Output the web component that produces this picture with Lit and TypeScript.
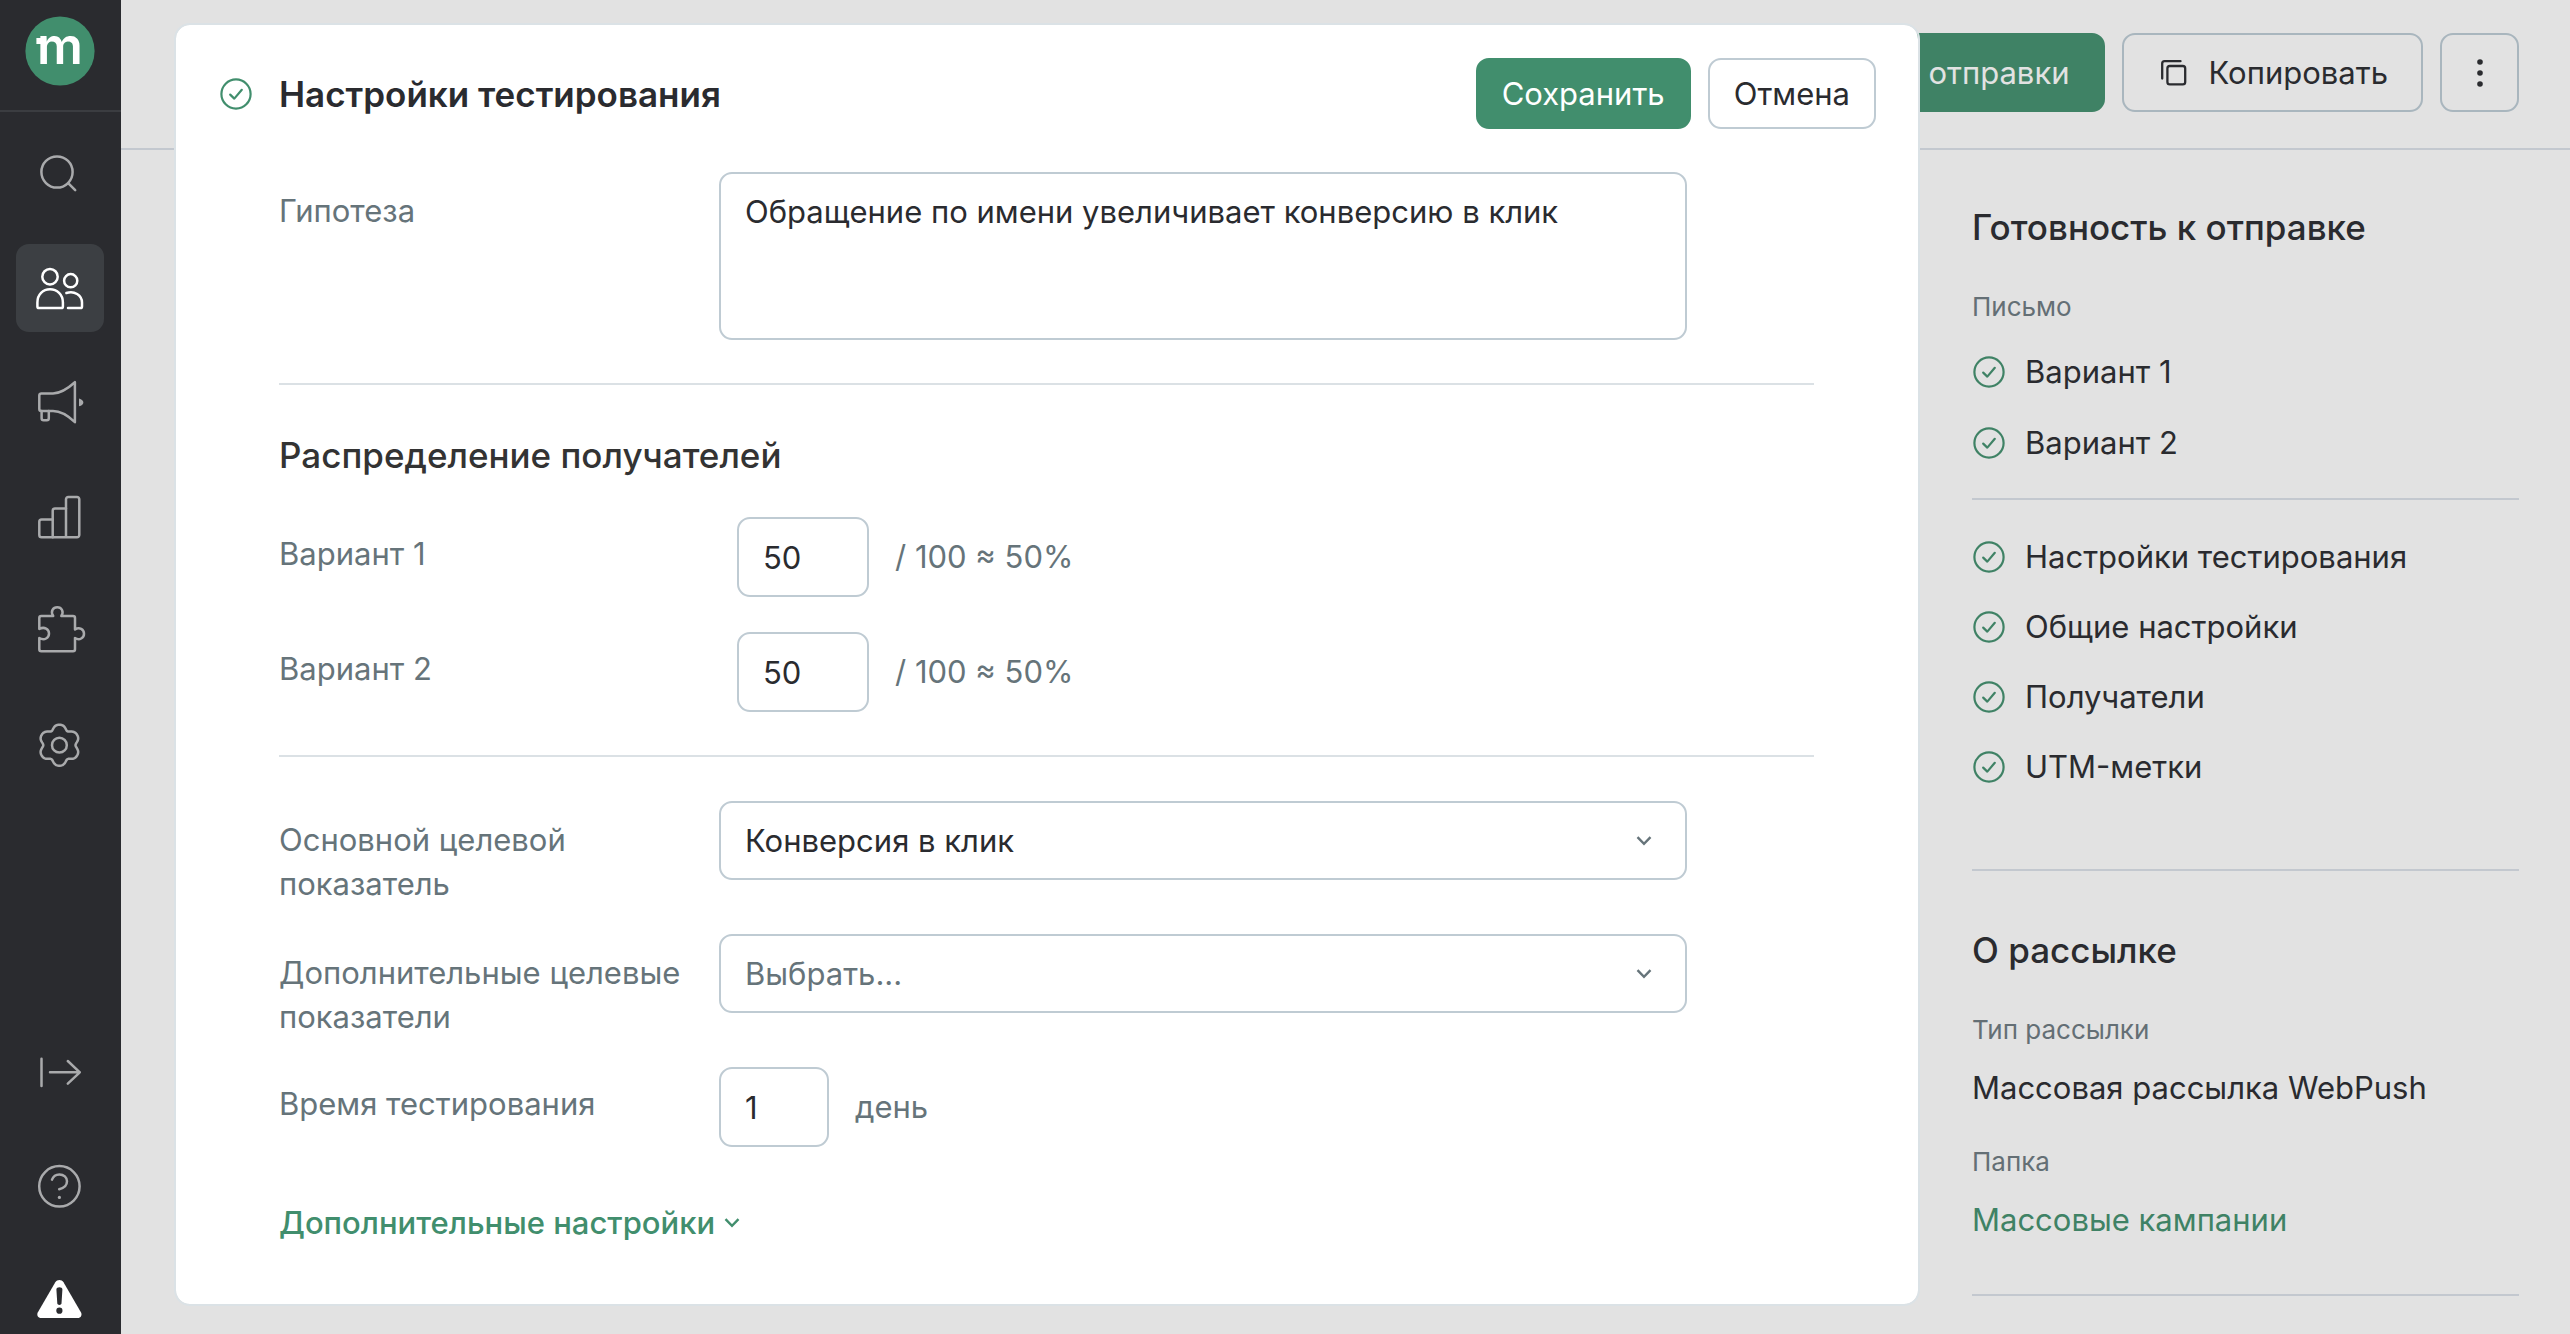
import { LitElement, html, svg, css, type SVGTemplateResult } from "lit";
import { customElement, property, state } from "lit/decorators.js";
import { classMap } from "lit/directives/class-map.js";

/* Closed wavy outline of the settings gear: six soft lobes round a centre. */
function gearOutline(cx: number, cy: number): string {
  const points: string[] = [];
  for (let i = 0; i < 120; i++) {
    const a = (i / 120) * Math.PI * 2;
    const r = 18.7 + 2.2 * Math.cos(6 * a) - 0.4 * Math.cos(12 * a);
    points.push(`${(cx + r * Math.sin(a)).toFixed(2)} ${(cy - r * Math.cos(a)).toFixed(2)}`);
  }
  return `M${points.join("L")}Z`;
}

const glyphs: Record<string, SVGTemplateResult> = {
  search: svg`<circle cx="21" cy="22" r="15.6"/><path d="M32.2 33.2L39.2 40.2"/>`,
  people: svg`
    <circle cx="14" cy="12.7" r="7.7"/>
    <circle cx="34.7" cy="16.7" r="6.6"/>
    <path d="M1.4 38.5C1.4 30.5 7 25.3 14 25.3S26.9 30.5 26.9 38.5V42.4a1.6 1.6 0 0 1-1.6 1.6H3a1.6 1.6 0 0 1-1.6-1.6Z"/>
    <path d="M30.4 29C38.2 26.2 46 31.2 46 38.5V42.4a1.6 1.6 0 0 1-1.6 1.6H32"/>`,
  campaign: svg`
    <path d="M5.3 15.4H17C25 15.4 33 9.5 38.9 4.2V44.2C33 38.5 25 33 17 33H5.3a2 2 0 0 1-2-2V17.4a2 2 0 0 1 2-2Z"/>
    <path d="M5.6 33V40.3a2 2 0 0 0 2 2H10.8a2 2 0 0 0 2-2V33"/>
    <path class="solid" d="M43 20.4C48.8 21.8 48.8 26.9 43 28.3Z"/>`,
  reports: svg`
    <path d="M16.7 27.5H5.6a2.3 2.3 0 0 0-2.3 2.3V43a2.3 2.3 0 0 0 2.3 2.3H41a2.3 2.3 0 0 0 2.3-2.3V7.3A2.3 2.3 0 0 0 41 5H32.3A2.3 2.3 0 0 0 30 7.3V45.3"/>
    <path d="M30 16.5H19a2.3 2.3 0 0 0-2.3 2.3V45.3"/>`,
  puzzle: svg`
    <path d="M3.3 23V12a2 2 0 0 1 2-2H17.2C14.2 5.5 17 1.3 21.3 1.3S28.3 5.5 25.3 10H37a2 2 0 0 1 2 2V23.5C43.5 20.5 48 23.5 48 27.7S43.5 34.9 39 32V43.3a2 2 0 0 1-2 2H5.3a2 2 0 0 1-2-2V32C8.5 35 13 31.8 13 27.5S8.5 20.2 3.3 23Z"/>`,
  settings: svg`<circle cx="23.4" cy="25.2" r="7.4"/><path d=${gearOutline(23.4, 25.2)}/>`,
  expand: svg`<path d="M5.5 10.8V38M14 24.3H43.8M31.8 13L43.8 24.3L31.8 35.6"/>`,
  help: svg`
    <circle cx="23.4" cy="24.3" r="20.2"/>
    <path d="M16 17.6C17.2 14.3 20 12.4 23.4 12.4C27.8 12.4 31 15.5 31 19.3C31 23.5 27.5 26.2 23.2 27.2"/>
    <circle class="solid" cx="23.4" cy="35.4" r="1.6"/>`,
  warning: svg`
    <path class="solid" d="M19.3 6.3C21.2 3.1 25.6 3.1 27.5 6.3L44.9 36.2C46.5 39 44.8 42 41.6 42H5.2C2 42 .3 39 1.9 36.2Z"/>
    <path class="cut" d="M20.4 13.4C20.2 10.4 26.6 10.4 26.4 13.4L25.5 27.6C25.3 29.4 21.5 29.4 21.3 27.6Z"/>
    <circle class="cut" cx="23.4" cy="34.7" r="3.1"/>`,
};

@customElement("rail-nav")
class RailNav extends LitElement {
  static styles = css`
    :host {
      display: flex;
      flex-direction: column;
      box-sizing: border-box;
      width: 121px;
      height: 100vh;
      flex: none;
      background: #2a2b2f;
    }
    .brand {
      display: flex;
      justify-content: center;
      padding: 16px 2px 24px 0;
      border-bottom: 2px solid #3b3d41;
    }
    .logo {
      width: 70px;
      height: 70px;
    }
    .logo-disc {
      fill: #418e6d;
    }
    .logo-mark {
      fill: #fff;
      font: 600 51px Inter, "Liberation Sans", sans-serif;
    }
    .group {
      display: flex;
      flex-direction: column;
      align-items: center;
      gap: 26px;
      padding: 18px 1px 0 0;
    }
    .tail {
      margin-top: auto;
      gap: 46px;
      padding-top: 0;
    }
    .item {
      display: grid;
      place-items: center;
      width: 88px;
      height: 88px;
      border-radius: 13px;
      color: #a9aaac;
    }
    .tail .item {
      height: 68px;
    }
    .active {
      background: #3c3f43;
      color: #fff;
    }
    .alert {
      color: #fff;
    }
    .icon {
      width: 48px;
      height: 48px;
      overflow: visible;
      fill: none;
      stroke: currentColor;
      stroke-width: 2.5;
      stroke-linecap: round;
      stroke-linejoin: round;
    }
    .solid {
      fill: currentColor;
      stroke: none;
    }
    .cut {
      fill: #2a2b2f;
      stroke: none;
    }
  `;

  private item(name: string, label: string, extra: Record<string, boolean> = {}) {
    return html`<a href="#" class=${classMap({ item: true, ...extra })} aria-label=${label}>
      <svg class="icon" viewBox="0 0 48 48" aria-hidden="true">${glyphs[name]}</svg>
    </a>`;
  }

  render() {
    return html`
      <div class="brand">
        <svg class="logo" viewBox="0 0 70 70" aria-hidden="true">
          <circle class="logo-disc" cx="35" cy="35" r="34.6" />
          <text class="logo-mark" x="12" y="48">m</text>
          <rect x="11.4" y="22" width="6" height="6" fill="#fff" />
        </svg>
      </div>
      <nav class="group">
        ${this.item("search", "Поиск")}
        ${this.item("people", "Клиенты", { active: true })}
        ${this.item("campaign", "Кампании")}
        ${this.item("reports", "Отчёты")}
        ${this.item("puzzle", "Интеграции")}
        ${this.item("settings", "Настройки")}
      </nav>
      <nav class="group tail">
        ${this.item("expand", "Развернуть")}
        ${this.item("help", "Помощь")}
        ${this.item("warning", "Предупреждение", { alert: true })}
      </nav>
    `;
  }
}

@customElement("check-mark")
class CheckMark extends LitElement {
  static styles = css`
    :host {
      display: block;
      flex: none;
      width: 32px;
      height: 32px;
    }
    .mark {
      display: block;
      fill: none;
      stroke: currentColor;
      stroke-width: 2.2;
      stroke-linecap: round;
      stroke-linejoin: round;
    }
  `;
  render() {
    return html`<svg class="mark" width="32" height="32" viewBox="0 0 32 32" aria-hidden="true">
      <circle cx="16" cy="16" r="14.6" />
      <path d="M10.2 16.6L14.3 20.6L21.8 11.8" />
    </svg>`;
  }
}

@customElement("status-panel")
class StatusPanel extends LitElement {
  @property({ attribute: false }) letters = ["Вариант 1", "Вариант 2"];
  @property({ attribute: false }) steps = [
    "Настройки тестирования",
    "Общие настройки",
    "Получатели",
    "UTM-метки",
  ];

  static styles = css`
    :host {
      display: block;
      font-size: 31px;
      line-height: 44px;
      color: #2a2b2f;
    }
    .section {
      border-bottom: 2px solid #c3c8cf;
    }
    .title {
      margin: 0 0 41px;
      font-size: 35px;
      line-height: 44px;
      font-weight: 500;
    }
    .caption {
      margin: 0;
      font-size: 26px;
      line-height: 34px;
      color: #646f75;
    }
    .list {
      display: flex;
      flex-direction: column;
      gap: 27px;
      margin: 0;
      padding: 26px 0 33px;
      list-style: none;
    }
    .steps {
      gap: 26px;
      padding: 35px 0 80px;
    }
    .row {
      display: flex;
      align-items: center;
      gap: 20px;
      padding-left: 1px;
    }
    .tick {
      color: #3f8265;
    }
    .about {
      padding: 57px 0 52px;
    }
    .facts {
      margin: 0;
      display: grid;
      gap: 35px;
    }
    .value {
      margin: 19px 0 0;
    }
    .link {
      color: #3f8265;
      text-decoration: none;
    }
  `;

  private row(text: string) {
    return html`<li class="row"><check-mark class="tick"></check-mark>${text}</li>`;
  }

  render() {
    return html`
      <section class="section">
        <h2 class="title">Готовность к отправке</h2>
        <p class="caption">Письмо</p>
        <ul class="list">
          ${this.letters.map((t) => this.row(t))}
        </ul>
      </section>
      <section class="section">
        <ul class="list steps">
          ${this.steps.map((t) => this.row(t))}
        </ul>
      </section>
      <section class="section about">
        <h2 class="title">О рассылке</h2>
        <dl class="facts">
          <div>
            <dt class="caption">Тип рассылки</dt>
            <dd class="value">Массовая рассылка WebPush</dd>
          </div>
          <div>
            <dt class="caption">Папка</dt>
            <dd class="value"><a class="link" href="#">Массовые кампании</a></dd>
          </div>
        </dl>
      </section>
    `;
  }
}

const chevron = html`<svg class="chevron" width="16" height="10" viewBox="0 0 16 10" aria-hidden="true">
  <path d="M1.5 1.2L8 7.8L14.5 1.2" fill="none" stroke="currentColor" stroke-width="2.4" />
</svg>`;

@customElement("test-settings")
class TestSettings extends LitElement {
  @state() private shares = [50, 50];

  static styles = css`
    :host {
      display: block;
      box-sizing: border-box;
      padding: 33px 42px 59px 44px;
      background: #fff;
      background-clip: padding-box;
      border: 2px solid #dbe2e6;
      border-radius: 16px;
      font-size: 31px;
      line-height: 44px;
      color: #2a2b2f;
    }
    .head {
      display: flex;
      align-items: center;
      gap: 17px;
    }
    .tick {
      margin-right: 10px;
      color: #418e6d;
    }
    .title {
      flex: 1;
      margin: 0;
      font-size: 35px;
      line-height: 44px;
      font-weight: 600;
    }
    .button {
      box-sizing: border-box;
      height: 71px;
      padding: 0 24px;
      border: 2px solid #bfcbd3;
      border-radius: 13px;
      background: #fff;
      font: inherit;
      color: inherit;
    }
    .primary {
      border-color: #418e6d;
      background: #418e6d;
      color: #fff;
    }
    .body {
      padding: 43px 62px 0 59px;
    }
    .block {
      display: grid;
      gap: 28px;
      padding: 0 127px 43px 0;
      border-bottom: 2px solid #dbe1e5;
    }
    .shares {
      gap: 35px;
    }
    .last {
      padding-top: 44px;
      padding-bottom: 54px;
      border-bottom: 0;
    }
    .subtitle {
      margin: 48px 0 5px;
      font-size: 35px;
      line-height: 44px;
      font-weight: 500;
      color: #333;
    }
    .field {
      display: grid;
      grid-template-columns: 440px minmax(0, 1fr);
      align-items: start;
    }
    .label {
      padding: 17px 30px 0 0;
      color: #66747a;
    }
    .number-label {
      padding-top: 15px;
    }
    .inline {
      display: flex;
      align-items: center;
      gap: 26px;
      color: #66747a;
    }
    .inset {
      padding-left: 18px;
    }
    .control {
      box-sizing: border-box;
      display: block;
      width: 100%;
      height: 80px;
      margin: 0;
      padding: 0 24px;
      border: 2px solid #bfcbd3;
      border-radius: 13px;
      background: #fff;
      font: inherit;
      color: #2a2b2f;
      outline: none;
    }
    .text {
      height: 168px;
      padding: 16px 24px;
      resize: none;
    }
    .share {
      width: 132px;
    }
    .days {
      width: 110px;
    }
    .picker {
      display: grid;
      align-items: center;
      color: #66747a;
    }
    .select {
      grid-area: 1 / 1;
      height: 79px;
      appearance: none;
    }
    .empty {
      color: #66747a;
    }
    .picker .chevron {
      grid-area: 1 / 1;
      justify-self: end;
      margin-right: 35px;
      pointer-events: none;
    }
    .more {
      display: flex;
      align-items: center;
      gap: 9px;
      margin: 0;
      padding: 0;
      border: 0;
      background: none;
      font: inherit;
      font-weight: 500;
      color: #418e6d;
    }
  `;

  render() {
    return html`
      <header class="head">
        <check-mark class="tick"></check-mark>
        <h1 class="title">Настройки тестирования</h1>
        <button class="button primary" type="submit">Сохранить</button>
        <button class="button" type="button">Отмена</button>
      </header>
      <div class="body">
        <div class="block">
          <div class="field">
            <label class="label" for="hypothesis">Гипотеза</label>
            <textarea
              class="control text"
              id="hypothesis"
              .value=${"Обращение по имени увеличивает конверсию в клик"}
            ></textarea>
          </div>
        </div>
        <div class="block shares">
          <h2 class="subtitle">Распределение получателей</h2>
          ${this.shares.map(
            (share, i) => html`<div class="field">
              <label class="label number-label" for="share-${i}">Вариант ${i + 1}</label>
              <div class="inline inset">
                <input class="control share" id="share-${i}" inputmode="numeric" .value=${String(share)} />
                <span>/ 100 ≈ ${share}%</span>
              </div>
            </div>`
          )}
        </div>
        <div class="block last">
          <div class="field">
            <label class="label" for="goal">Основной целевой показатель</label>
            <div class="picker">
              <select class="control select" id="goal">
                <option>Конверсия в клик</option>
              </select>
              ${chevron}
            </div>
          </div>
          <div class="field">
            <label class="label" for="extra">Дополнительные целевые показатели</label>
            <div class="picker">
              <select class="control select empty" id="extra">
                <option>Выбрать...</option>
              </select>
              ${chevron}
            </div>
          </div>
          <div class="field">
            <label class="label number-label" for="days">Время тестирования</label>
            <div class="inline">
              <input class="control days" id="days" inputmode="numeric" .value=${"1"} />
              <span>день</span>
            </div>
          </div>
        </div>
        <button class="more" type="button">Дополнительные настройки ${chevron}</button>
      </div>
    `;
  }
}

@customElement("app-root")
class AppRoot extends LitElement {
  static styles = css`
    :host {
      display: flex;
      height: 100vh;
      overflow: hidden;
      background: #e2e2e2;
      font-family: Inter, "Liberation Sans", sans-serif;
      font-size: 31px;
      line-height: 44px;
      color: #2a2b2f;
    }
    .page {
      position: relative;
      flex: 1;
      min-width: 0;
    }
    .bar {
      display: flex;
      justify-content: flex-end;
      gap: 17px;
      padding: 33px 51px 36px;
      border-bottom: 2px solid #c3c8cf;
    }
    .button {
      box-sizing: border-box;
      display: flex;
      align-items: center;
      justify-content: center;
      gap: 21px;
      height: 79px;
      padding: 0 33px 0 36px;
      border: 2px solid #a9b6be;
      border-radius: 13px;
      background: none;
      font: inherit;
      color: inherit;
    }
    .send {
      padding-left: 96px;
      border-color: #3f8265;
      background: #3f8265;
      color: #e2e2e2;
    }
    .menu {
      width: 79px;
      padding: 0;
    }
    .content {
      display: flex;
      justify-content: flex-end;
      padding: 55px 51px 38px;
    }
    .side {
      width: 547px;
    }
    .dialog {
      position: absolute;
      top: 23px;
      left: 53px;
      right: 650px;
    }
  `;

  render() {
    return html`
      <rail-nav></rail-nav>
      <div class="page">
        <header class="bar">
          <button class="button send" type="button">отправки</button>
          <button class="button" type="button">
            <svg width="28" height="28" viewBox="0 0 28 28" fill="none" stroke="currentColor" stroke-width="2.3" stroke-linecap="round" aria-hidden="true">
              <path d="M20.5 2.2H4.6a2.4 2.4 0 0 0-2.4 2.4V19.5" />
              <rect x="7.4" y="7" width="17.8" height="18.4" rx="2.4" />
            </svg>
            Копировать
          </button>
          <button class="button menu" type="button" aria-label="Ещё">
            <svg width="8" height="30" viewBox="0 0 8 30" fill="currentColor" aria-hidden="true">
              <circle cx="4" cy="4" r="2.8" />
              <circle cx="4" cy="15" r="2.8" />
              <circle cx="4" cy="26" r="2.8" />
            </svg>
          </button>
        </header>
        <main class="content">
          <status-panel class="side"></status-panel>
        </main>
        <test-settings class="dialog" role="dialog" aria-label="Настройки тестирования"></test-settings>
      </div>
    `;
  }
}
